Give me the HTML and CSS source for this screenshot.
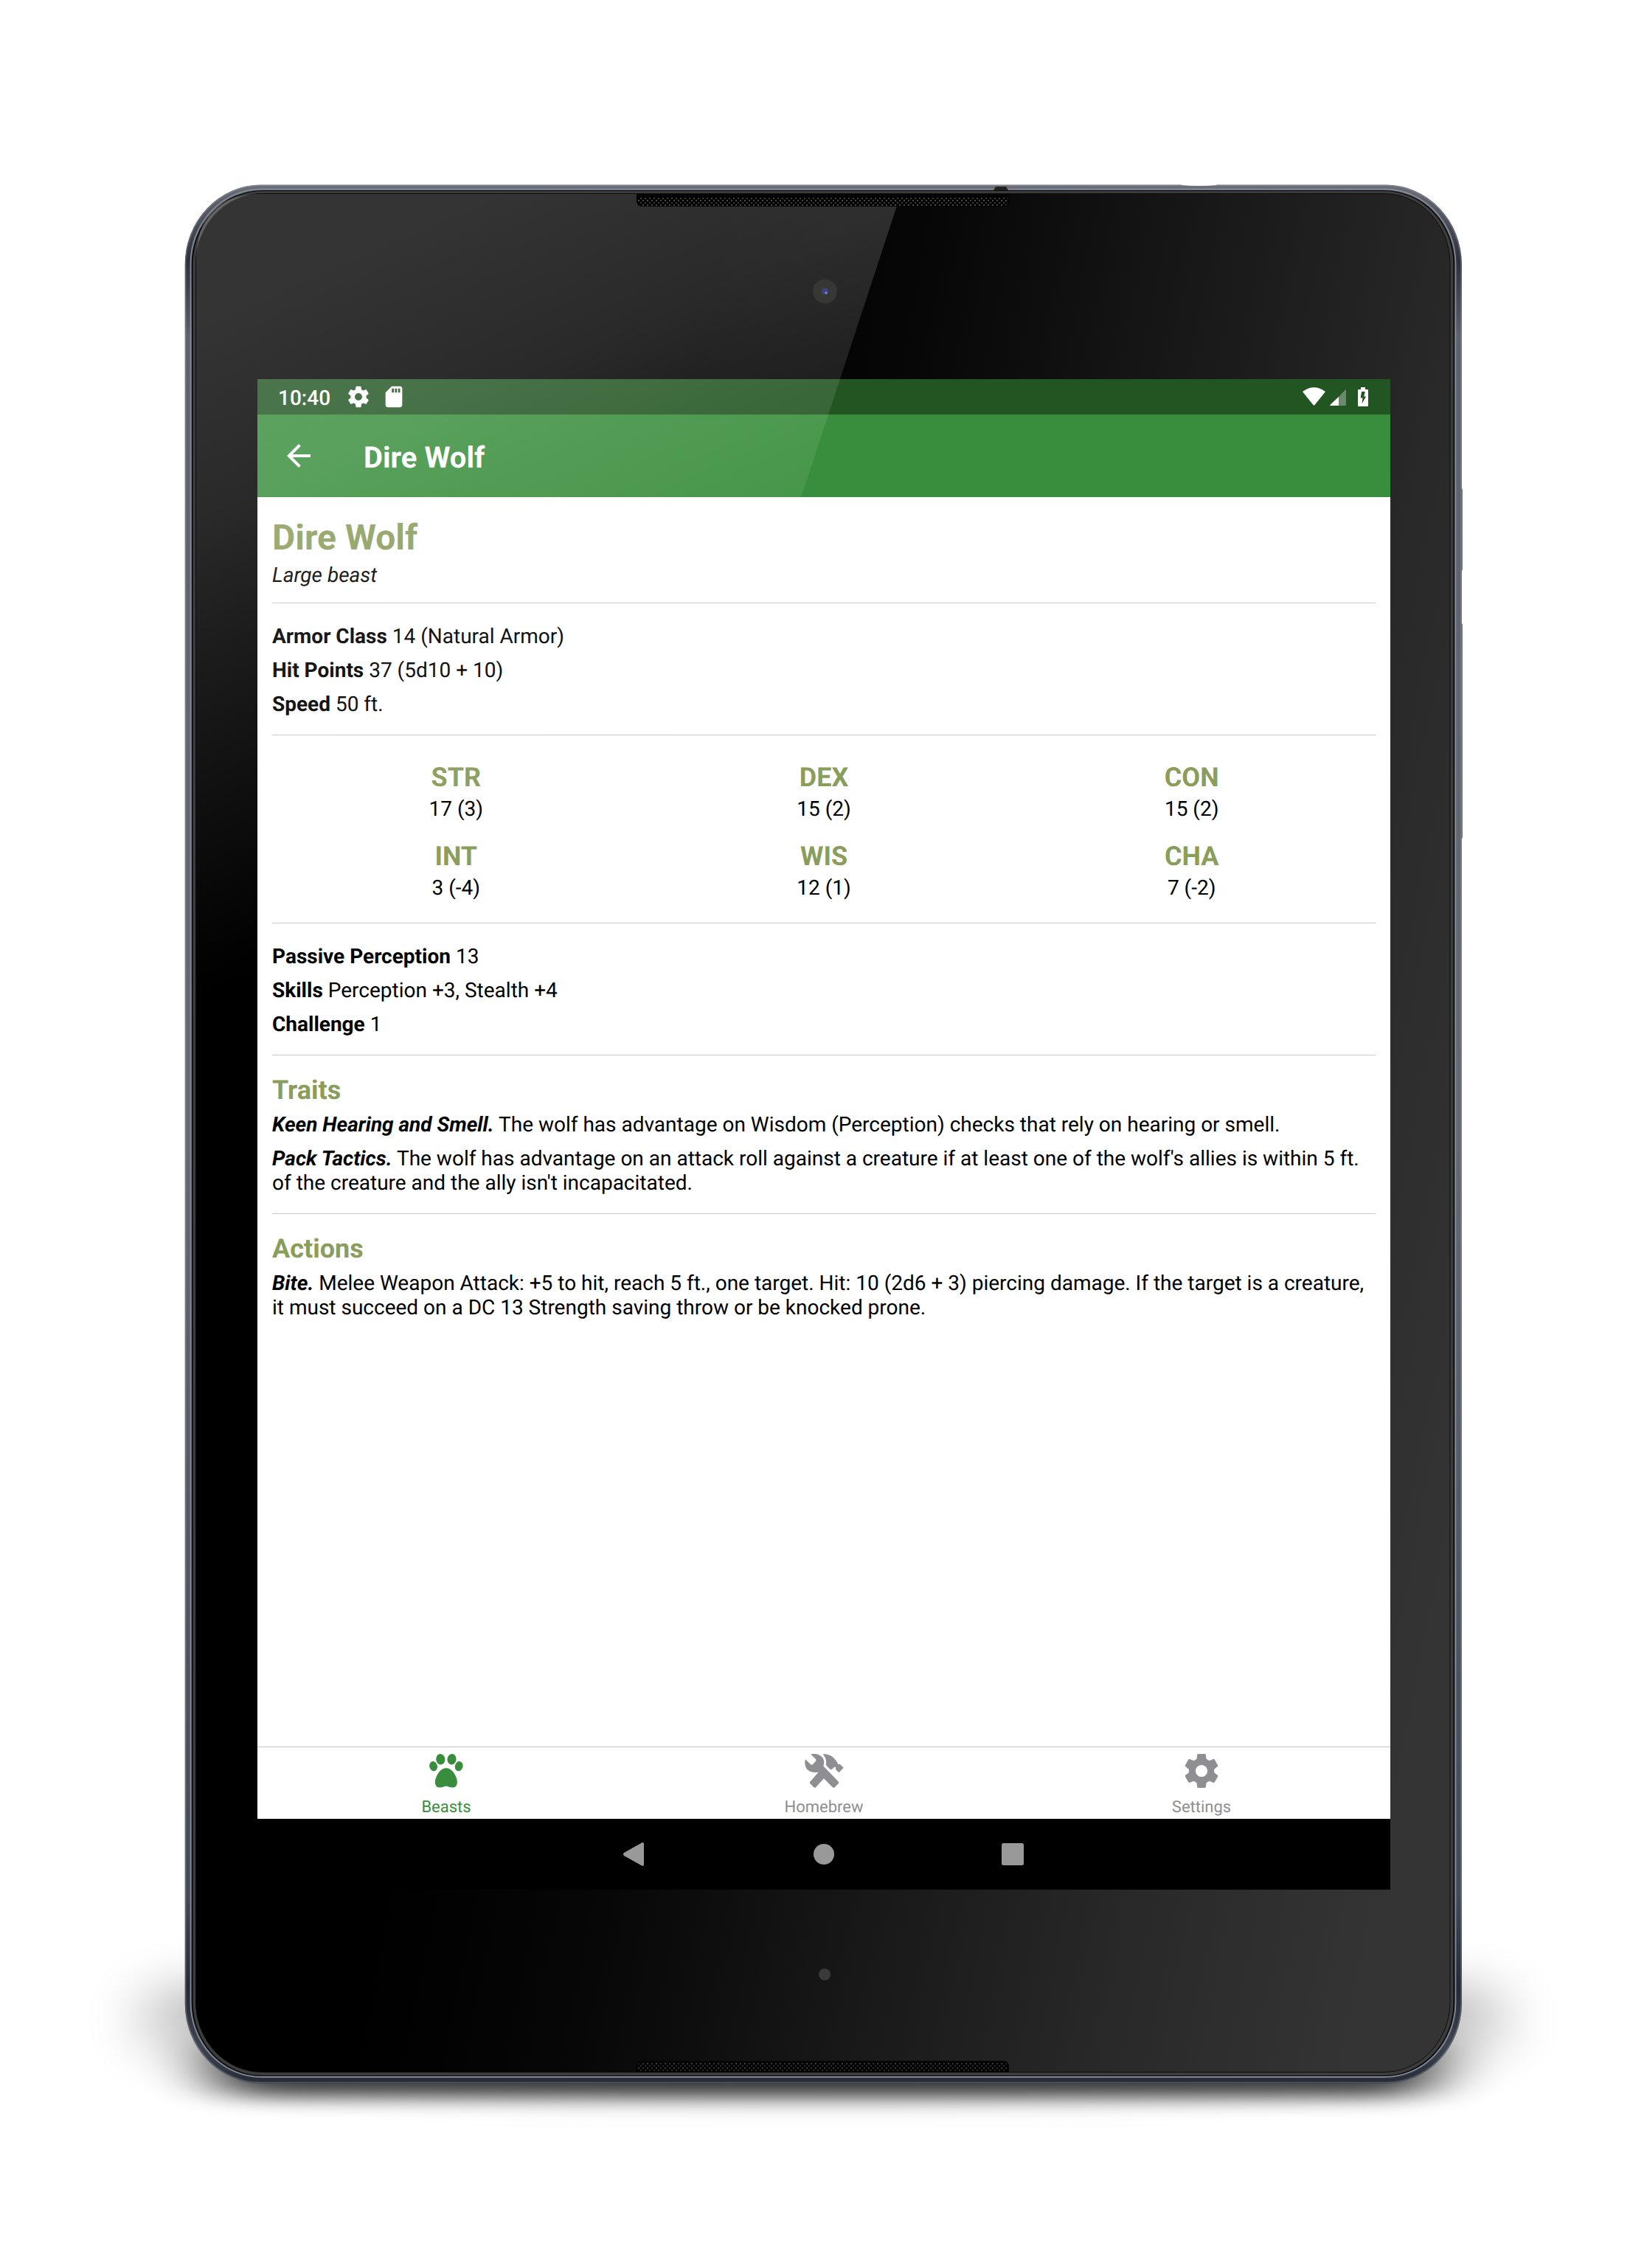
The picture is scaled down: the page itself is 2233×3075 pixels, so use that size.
FILE: index.html
```html
<!DOCTYPE html>
<html lang="en">
<head>
<meta charset="utf-8">
<title>Dire Wolf</title>
<link rel="stylesheet" href="styles.css">
</head>
<body>
<div class="stage">
  <svg class="device" viewBox="0 0 2233 3075" aria-hidden="true">
    <defs>
      <filter id="soft" x="-30%" y="-100%" width="160%" height="300%"><feGaussianBlur stdDeviation="38 40"/></filter>
      <filter id="tight" x="-10%" y="-100%" width="120%" height="300%"><feGaussianBlur stdDeviation="46 13"/></filter>
      <linearGradient id="metal" gradientUnits="userSpaceOnUse" x1="0" y1="250" x2="0" y2="2825">
        <stop offset="0" stop-color="#6a6f79"/><stop offset=".02" stop-color="#4a4f5a"/><stop offset=".04" stop-color="#2c303a"/>
        <stop offset=".08" stop-color="#5c616c"/><stop offset=".5" stop-color="#646972"/><stop offset=".9" stop-color="#434a56"/>
        <stop offset=".95" stop-color="#242933"/><stop offset=".98" stop-color="#3e4450"/><stop offset="1" stop-color="#252b36"/>
      </linearGradient>
      <linearGradient id="glass" gradientUnits="userSpaceOnUse" x1="1000" y1="200" x2="2300" y2="460">
        <stop offset="0" stop-color="#000"/><stop offset=".2" stop-color="#060606"/><stop offset=".32" stop-color="#0d0d0d"/>
        <stop offset=".44" stop-color="#151515"/><stop offset=".74" stop-color="#282828"/><stop offset=".82" stop-color="#2c2c2c"/><stop offset="1" stop-color="#343434"/>
      </linearGradient>
      <pattern id="mesh" width="6" height="6" patternUnits="userSpaceOnUse">
        <rect width="6" height="6" fill="#030303"/><rect x="1" y="1" width="2" height="2" fill="#484848"/><rect x="4" y="4" width="2" height="2" fill="#3a3a3a"/>
      </pattern>
    </defs>
    <ellipse cx="1116" cy="2738" rx="935" ry="70" fill="#000" opacity=".42" filter="url(#soft)"/>
    <rect x="290" y="2765" width="1653" height="78" rx="39" fill="#000" opacity=".75" filter="url(#tight)"/>
    <rect x="1974" y="662" width="9" height="112" rx="2" fill="#757a84"/>
    <rect x="1974" y="845" width="9" height="292" rx="2" fill="#757a84"/>
    <rect x="250.700" y="250.500" width="1731.200" height="2574" rx="103" ry="108" fill="url(#metal)"/>
    <rect x="251.700" y="251.500" width="1729.200" height="2572" rx="102" ry="107" fill="none" stroke="#9a9da3" stroke-width="1.500" opacity=".4"/>
    <rect x="258.500" y="256.500" width="1715" height="2559.500" rx="96" ry="101" fill="none" stroke="#828893" stroke-width="1.800"/>
    <rect x="260" y="258" width="1712" height="2557" rx="95" ry="100" fill="#050505"/>
    <rect x="261.500" y="259" width="1709" height="2555" rx="94" ry="99" fill="#3c3c3c"/>
    <rect x="265.500" y="262.500" width="1700.500" height="2547" rx="90" ry="95" fill="url(#glass)" stroke="#0c0c0c" stroke-width="1"/>
    <path d="M1347 258l3-5h14l3 5z" fill="#222"/>
    <path d="M1602 249h47v2q-23 2-47 0z" fill="#fff"/>
    <path d="M863 263h506v9q0 8-8 8H871q-8 0-8-8z" fill="#030303"/>
    <path d="M865 268h502v3q0 8-6 8H871q-6 0-6-8z" fill="url(#mesh)"/>
    <path d="M862 2810v-8q0-8 8-8h490q8 0 8 8v8z" fill="#050505"/>
    <path d="M864 2808v-5q0-6 6-6h490q6 0 6 6v5z" fill="url(#mesh)" opacity=".7"/>
    <circle cx="1118" cy="2677" r="8" fill="#3a3a3a"/>
  </svg>

  <main class="screen">
    <header class="status">
      <span class="clock">10:40</span>
      <svg class="s-icon" viewBox="0 0 24 24"><path fill="#fff" d="M19.430 12.980c.04-.32.07-.64.07-.98s-.03-.66-.07-.98l2.110-1.650c.19-.15.24-.42.12-.64l-2-3.460c-.12-.22-.39-.3-.61-.22l-2.490 1c-.52-.4-1.080-.73-1.690-.98l-.38-2.650C14.460 2.180 14.250 2 14 2h-4c-.25 0-.46.18-.49.42l-.38 2.650c-.61.25-1.170.59-1.690.98l-2.490-1c-.23-.09-.49 0-.61.22l-2 3.460c-.13.22-.07.49.12.64l2.110 1.650c-.04.32-.07.65-.07.98s.03.66.07.98l-2.110 1.650c-.19.15-.24.42-.12.64l2 3.460c.12.22.39.3.61.22l2.490-1c.52.4 1.080.73 1.690.98l.38 2.650c.03.24.24.42.49.42h4c.25 0 .46-.18.49-.42l.38-2.650c.61-.25 1.170-.59 1.690-.98l2.490 1c.23.09.49 0 .61-.22l2-3.460c.12-.22.07-.49-.12-.64l-2.110-1.650zM12 15.500c-1.930 0-3.500-1.570-3.500-3.500s1.570-3.500 3.500-3.500 3.500 1.570 3.500 3.500-1.570 3.500-3.500 3.500z"/></svg>
      <svg class="s-icon" viewBox="0 0 24 24"><path fill="#fff" d="M18 2h-8L4 8v12c0 1.100.9 2 2 2h12c1.100 0 2-.9 2-2V4c0-1.100-.9-2-2-2zm-6 6h-2V4h2v4zm3 0h-2V4h2v4zm3 0h-2V4h2v4z"/></svg>
      <div class="signals">
        <svg width="31" height="25" viewBox="0 0 31 25"><path fill="#fff" d="M0 6Q15.500-5.500 31 6L16.500 24q-1 1.200-2 0z"/></svg>
        <svg class="cell" width="22" height="22" viewBox="0 0 22 22"><path fill="#fff" opacity=".32" d="M12 10L21 .5q1-.8 1 .5v20q0 1-1 1h-9z"/><path fill="#fff" d="M12 10v12H1q-1.500 0-.5-1.300z"/></svg>
        <svg class="battery" width="14" height="26" viewBox="0 0 14 26"><path fill="#fff" fill-rule="evenodd" d="M4 0h6v3h2.800q1.200 0 1.200 1.200v20.600q0 1.200-1.200 1.200H1.200Q0 26 0 24.800V4.200Q0 3 1.200 3H4zM9.800 6H5l-1.300 8.500h2.800L5.500 22.500 11 12.500H8.200z"/></svg>
      </div>
    </header>

    <div class="appbar">
      <svg class="back" viewBox="0 0 32 32"><path fill="#fff" d="M32 14H7.660L18.840 2.820 16 0 0 16l16 16 2.820-2.820L7.660 18H32z"/></svg>
      <span class="appbar-title">Dire Wolf</span>
    </div>

    <article class="sheet">
      <h1>Dire Wolf</h1>
      <p class="kind">Large beast</p>
      <hr>
      <div class="rows stats">
        <p><b>Armor Class</b> 14 (Natural Armor)</p>
        <p><b>Hit Points</b> 37 (5d10 + 10)</p>
        <p><b>Speed</b> 50 ft.</p>
      </div>
      <hr>
      <div class="abilities">
        <div><h2>STR</h2><p>17 (3)</p></div>
        <div><h2>DEX</h2><p>15 (2)</p></div>
        <div><h2>CON</h2><p>15 (2)</p></div>
        <div><h2>INT</h2><p>3 (-4)</p></div>
        <div><h2>WIS</h2><p>12 (1)</p></div>
        <div><h2>CHA</h2><p>7 (-2)</p></div>
      </div>
      <hr>
      <div class="rows stats">
        <p><b>Passive Perception</b> 13</p>
        <p><b>Skills</b> Perception +3, Stealth +4</p>
        <p><b>Challenge</b> 1</p>
      </div>
      <hr>
      <section class="block">
        <h2>Traits</h2>
        <div class="rows">
          <p><b><i>Keen Hearing and Smell.</i></b> The wolf has advantage on Wisdom (Perception) checks that rely on hearing or smell.</p>
          <p><b><i>Pack Tactics.</i></b> The wolf has advantage on an attack roll against a creature if at least one of the wolf's allies is within 5 ft. of the creature and the ally isn't incapacitated.</p>
        </div>
      </section>
      <hr>
      <section class="block">
        <h2>Actions</h2>
        <div class="rows">
          <p><b><i>Bite.</i></b> Melee Weapon Attack: +5 to hit, reach 5 ft., one target. Hit: 10 (2d6 + 3) piercing damage. If the target is a creature, it must succeed on a DC 13 Strength saving throw or be knocked prone.</p>
        </div>
      </section>
    </article>

    <nav class="tabs">
      <a class="tab active">
        <svg width="46" height="46" viewBox="0 0 46 46"><g fill="currentColor"><ellipse cx="15.300" cy="7.300" rx="6" ry="7.300" transform="rotate(-8 15.300 7.300)"/><ellipse cx="30.500" cy="7.300" rx="6" ry="7.300" transform="rotate(8 30.500 7.300)"/><ellipse cx="5.600" cy="16.700" rx="5.300" ry="6.700" transform="rotate(-14 5.600 16.700)"/><ellipse cx="40.200" cy="16.700" rx="5.300" ry="6.700" transform="rotate(14 40.200 16.700)"/><path d="M22.900 19.300C30 19.300 35 27 37 33c1.500 5 1.700 12.300-5.200 12.600-4 .2-5.500-1.800-8.900-1.800s-4.900 2-8.900 1.800C7.100 45.300 7.300 38 8.800 33c2-6 7-13.700 14.100-13.700z"/></g></svg>
        <span>Beasts</span>
      </a>
      <a class="tab">
        <svg width="53" height="46" viewBox="32 36.500 159 138"><g fill="currentColor"><path d="M57 38C72 33 92 38 103 50 112 60 112 74 108 86L169 149Q173 153 169 157L154 172Q150 176 146 172L110 136 77 172Q73 175 69 172L55 158Q51 154 54 150L88 111C70 114 50 110 41 98 33 87 31 72 35 58L57 80H64L78 65V59Z"/><path d="M106 38C126 35 147 44 164 70L168 79 175 78 190 93 171 112 157 99 160 93 153 89 148 95 137 101 118 81C122 66 118 50 106 38Z"/></g></svg>
        <span>Homebrew</span>
      </a>
      <a class="tab">
        <svg width="46" height="46" viewBox="2 2 20 20"><path fill="currentColor" d="M19.430 12.980c.04-.32.07-.64.07-.98s-.03-.66-.07-.98l2.110-1.650c.19-.15.24-.42.12-.64l-2-3.460c-.12-.22-.39-.3-.61-.22l-2.490 1c-.52-.4-1.080-.73-1.690-.98l-.38-2.650C14.460 2.180 14.250 2 14 2h-4c-.25 0-.46.18-.49.42l-.38 2.650c-.61.25-1.170.59-1.690.98l-2.490-1c-.23-.09-.49 0-.61.22l-2 3.460c-.13.22-.07.49.12.64l2.110 1.650c-.04.32-.07.65-.07.98s.03.66.07.98l-2.110 1.650c-.19.15-.24.42-.12.64l2 3.460c.12.22.39.3.61.22l2.490-1c.52.4 1.080.73 1.690.98l.38 2.650c.03.24.24.42.49.42h4c.25 0 .46-.18.49-.42l.38-2.650c.61-.25 1.170-.59 1.690-.98l2.490 1c.23.09.49 0 .61-.22l2-3.460c.12-.22.07-.49-.12-.64l-2.110-1.650zM12 15.500c-1.930 0-3.500-1.570-3.500-3.500s1.570-3.500 3.500-3.500 3.500 1.570 3.500 3.500-1.570 3.500-3.500 3.500z"/></svg>
        <span>Settings</span>
      </a>
    </nav>

    <footer class="sysnav">
      <svg width="32" height="32" viewBox="2 0 32 32"><path fill="#999" d="M28 0q2 0 2 2v28q0 2-2 2L3 18q-2-2 0-4z"/></svg>
      <svg width="32" height="32" viewBox="0 0 32 32"><circle cx="16" cy="16" r="14" fill="#999"/></svg>
      <svg width="32" height="32" viewBox="0 0 32 32"><rect x="1" y="1" width="30" height="30" rx="2.500" fill="#999"/></svg>
    </footer>
  </main>

  <svg class="glare" viewBox="0 0 2233 3075" aria-hidden="true">
    <defs>
      <linearGradient id="shine" gradientUnits="userSpaceOnUse" x1="202" y1="457.500" x2="545.400" y2="1235.300">
        <stop offset="0" stop-color="#fff" stop-opacity=".205"/><stop offset=".29" stop-color="#fff" stop-opacity=".165"/>
        <stop offset=".5" stop-color="#fff" stop-opacity=".11"/><stop offset=".94" stop-color="#fff" stop-opacity=".01"/><stop offset="1" stop-color="#fff" stop-opacity="0"/>
      </linearGradient>
    </defs>
    <path d="M266 355Q266 263 355 263H863v9q0 8 8 8H1215.700L815 1500H266z" fill="url(#shine)"/>
    <circle cx="1118.500" cy="395" r="16.500" fill="#373736"/>
    <circle cx="1118.500" cy="395" r="4.500" fill="#3a4478"/>
    <circle cx="1120" cy="397" r="1.500" fill="#7d9be0"/>
  </svg>
</div>
</body>
</html>
```
FILE: styles.css
```css
* { box-sizing: border-box; }

body {
  margin: 0;
  background: #fff;
  font-family: Roboto, "Liberation Sans", sans-serif;
  color: #000;
  text-rendering: geometricPrecision;
}

h1, h2, p { margin: 0; }

.stage {
  position: relative;
  width: 2233px;
  height: 3075px;
  padding: 514px 348px 513px 349px;
  overflow: hidden;
}

.device,
.glare {
  position: absolute;
  inset: 0;
  width: 2233px;
  height: 3075px;
}

.glare { pointer-events: none; }

.screen {
  position: relative;
  display: flex;
  flex-direction: column;
  width: 1536px;
  height: 2048px;
  background: #fff;
}

.status {
  display: flex;
  align-items: center;
  height: 48px;
  padding: 0 30px 0 28px;
  background: #225522;
  color: #fff;
}

.clock {
  width: 92px;
  padding-top: 2px;
  font-size: 28px;
  font-weight: 500;
  line-height: 33px;
}

.s-icon {
  width: 34px;
  height: 34px;
  margin-right: 14px;
}

.signals {
  display: flex;
  align-items: flex-end;
  margin-left: auto;
  padding-bottom: 1px;
}

.cell { margin-left: 6px; }

.battery {
  margin-left: 16px;
  margin-bottom: -1px;
}

.appbar {
  display: flex;
  align-items: center;
  height: 112px;
  padding-left: 40px;
  background: #388e3c;
  color: #fff;
}

.back {
  width: 32px;
  height: 32px;
}

.appbar-title {
  margin: 5px 0 0 72px;
  font-size: 40px;
  font-weight: 700;
  line-height: 48px;
}

.sheet {
  flex: 1;
  padding: 27px 20px 0;
  font-size: 28px;
  line-height: 33px;
}

hr {
  height: 1px;
  margin: 0;
  border: 0;
  background: #c8c7cc;
}

h1 {
  height: 56px;
  font-size: 48px;
  font-weight: 700;
  line-height: 56px;
  color: #8b9d5b;
}

h2 {
  font-size: 36px;
  font-weight: 700;
  line-height: 42px;
  color: #8b9d5b;
}

.kind {
  padding: 6px 0 21px;
  font-style: italic;
}

.rows {
  display: flex;
  flex-direction: column;
  gap: 13px;
}

.stats { padding: 28px 0 25px; }

.abilities {
  display: grid;
  grid-template-columns: repeat(3, 1fr);
  row-gap: 27px;
  padding: 36px 0 31px;
  text-align: center;
}

.abilities p { margin-top: 5px; }

.block { padding: 26px 0 25px; }

.block .rows { padding-top: 9px; }

.tabs {
  display: grid;
  grid-template-columns: repeat(3, 1fr);
  height: 98px;
  border-top: 1px solid #c3c3c3;
}

.tab {
  display: flex;
  flex-direction: column;
  align-items: center;
  padding-top: 9px;
  font-size: 22px;
  line-height: 26px;
  color: #8e8e93;
}

.tab span { margin-top: 14px; }

.tab.active { color: #388e3c; }

.sysnav {
  display: flex;
  align-items: center;
  justify-content: center;
  gap: 224px;
  height: 96px;
  background: #000;
}
```
